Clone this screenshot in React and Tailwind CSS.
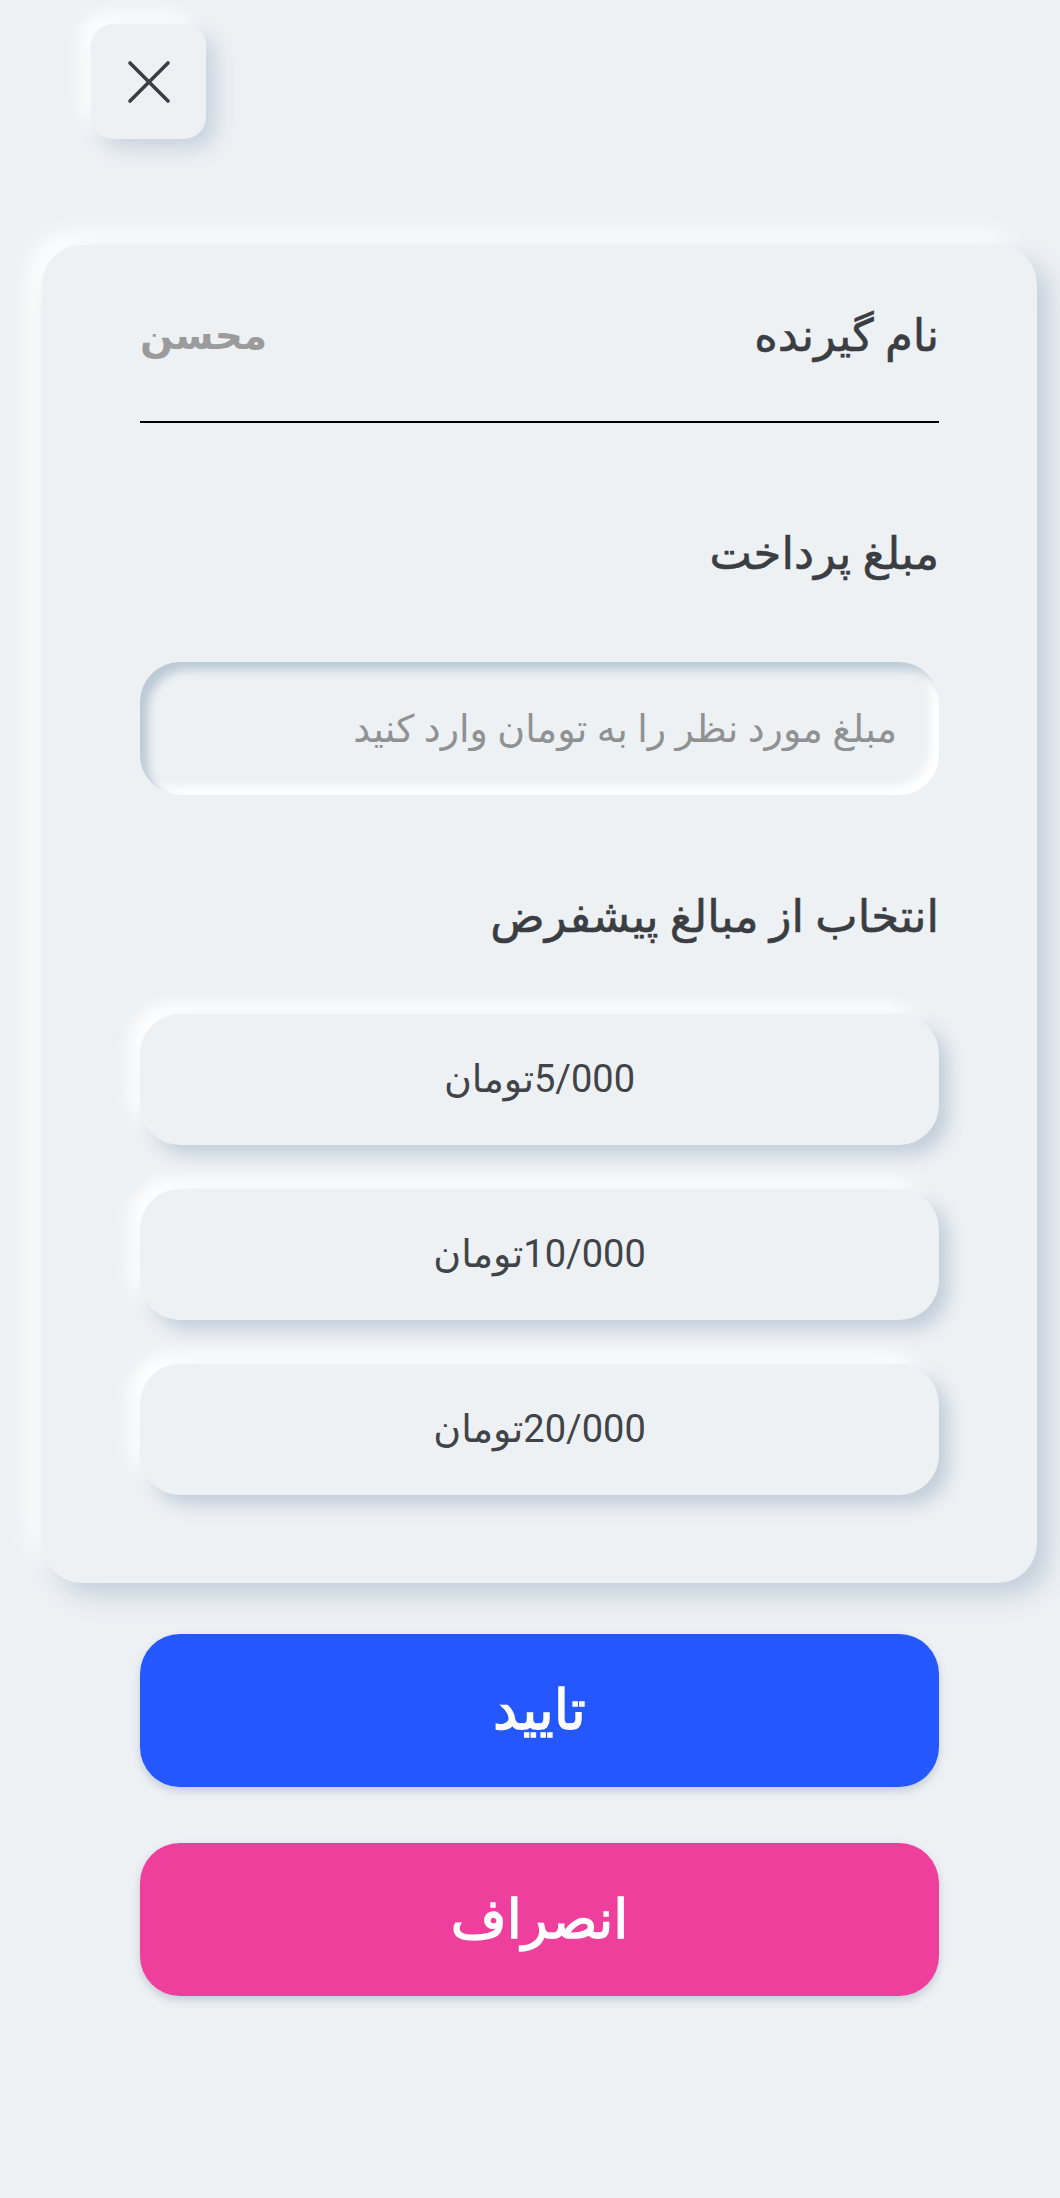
import React, { useState } from 'react'

const presets = ['5/000', '10/000', '20/000']

export default function App() {
    const [amount, setAmount] = useState('')

    return (
        <div
            className="min-h-[2198px] w-[1060px] bg-[#edf1f4] pt-[24px] pb-[100px]"
            style={{ fontFamily: 'Roboto, "Noto Sans", "DejaVu Sans", sans-serif' }}
        >
            {/* close button */}
            <button className="ml-[91px] flex h-[115px] w-[115px] items-center justify-center rounded-[22px] bg-[#edf1f4] shadow-[10px_10px_20px_#c9d3de,-10px_-10px_20px_#ffffff]">
                <svg width="44" height="44" viewBox="0 0 44 44" fill="none">
                    <path d="M3 3L41 41M41 3L3 41" stroke="#3a3d42" strokeWidth="3.6" strokeLinecap="round" />
                </svg>
            </button>

            {/* card */}
            <div
                dir="rtl"
                className="ml-[42px] mt-[106px] w-[995px] rounded-[40px] bg-[#edf1f4] px-[98px] pt-[50px] pb-[88px] shadow-[12px_12px_26px_#c3ced9,-12px_-12px_26px_#ffffff]"
            >
                <div className="flex h-[82px] items-center justify-between">
                    <span className="text-[45px] text-[#3a3d42] [-webkit-text-stroke:0.6px_currentColor]">نام گیرنده</span>
                    <span className="text-[39px] font-semibold text-[#9b9b9b]">محسن</span>
                </div>
                <div className="mt-[44px] h-[2px] bg-black" />

                <div className="mt-[91px] flex h-[80px] items-center text-[45px] text-[#3a3d42] [-webkit-text-stroke:0.6px_currentColor]">مبلغ پرداخت</div>

                <input
                    value={amount}
                    onChange={e => setAmount(e.target.value)}
                    placeholder="مبلغ مورد نظر را به تومان وارد کنید"
                    className="mt-[68px] h-[133px] w-full rounded-[40px] bg-[#edf1f4] px-[42px] text-[38px] text-[#3a3d42] outline-none placeholder:text-[#8f9193] shadow-[inset_8px_8px_10px_#bccad6,inset_-8px_-8px_10px_#ffffff]"
                />

                <div className="mt-[82px] flex h-[80px] items-center text-[45px] text-[#3a3d42] [-webkit-text-stroke:0.6px_currentColor]">انتخاب از مبالغ پیشفرض</div>

                <div className="mt-[57px] flex flex-col gap-[44px]">
                    {presets.map(p => (
                        <button
                            key={p}
                            onClick={() => setAmount(p)}
                            className="flex h-[131px] w-full items-center justify-center rounded-[40px] bg-[#edf1f4] text-[38px] text-[#404348] shadow-[10px_10px_18px_#c3ced9,-10px_-10px_18px_#ffffff]"
                        >
                            <span dir="ltr">{p}</span>
                            <span>تومان</span>
                        </button>
                    ))}
                </div>
            </div>

            {/* actions */}
            <div className="ml-[140px] mt-[51px] flex w-[799px] flex-col gap-[56px]">
                <button className="h-[153px] w-full rounded-[40px] bg-[#2457fd] text-[55px] text-white shadow-[0_4px_8px_#c5ccd6] [-webkit-text-stroke:1.4px_white]">
                    تایید
                </button>
                <button className="h-[153px] w-full rounded-[40px] bg-[#ee3f9c] text-[54px] text-white shadow-[0_4px_8px_#c5ccd6] [-webkit-text-stroke:1.4px_white]">
                    انصراف
                </button>
            </div>
        </div>
    )
}
